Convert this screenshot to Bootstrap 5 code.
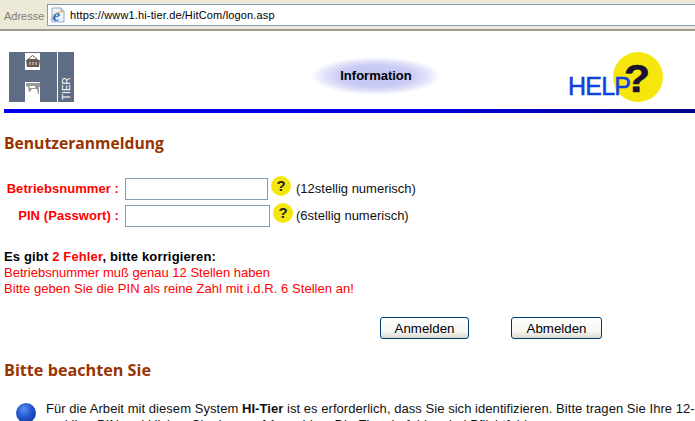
<!DOCTYPE html>
<html lang="de">
<head>
<meta charset="utf-8">
<title>HitCom Logon</title>
<link href="https://cdn.jsdelivr.net/npm/bootstrap@5.3.0/dist/css/bootstrap.min.css" rel="stylesheet">
<style>
html,body{width:695px;height:421px;overflow:hidden;background:#fff}
body{font-family:"Liberation Sans",Arial,sans-serif;font-size:13px;line-height:16px;color:#000}
.addr-bar{height:31px;background:#ece9d8;border-bottom:2px solid #9d9a8c;padding-top:4px}
.addr-label{color:#7f7d70;font-size:11px;padding:4px 0 0 4px;width:47px}
.addr-box{flex:1;height:22px;background:#fff;border:1px solid #7f9db9;border-right:0;gap:4px;padding-left:2px;font-size:11px;letter-spacing:.15px}
.head-row{height:78px;padding:21px 0 0 9px}
.logo-box{width:65px;height:50px}
.info-oval{width:130px;height:38px;margin-left:237px;margin-top:5px;font-weight:700;font-size:13px;background:radial-gradient(ellipse closest-side,#c6c6f6 0%,#cacaf6 55%,#e2e2fa 80%,#fff 100%)}
.help-box{width:98px;height:52px;margin-left:125px}
.blue-line{height:4px;margin-left:4px;background:linear-gradient(90deg,#0000ee 0%,#0000e0 60%,#00008a 100%)}
.sec-title{font-family:"Open Sans","DejaVu Sans",sans-serif;font-weight:700;line-height:20px;color:#993300;margin:0 0 0 4px}
.title-a{margin-top:20px;font-size:15.7px}
.title-b{margin-top:21px;font-size:16.2px}
.form-zone{margin-top:25px}
.form-line{height:27px;align-items:flex-start}
.lbl{width:119px;text-align:right;color:#f00;font-weight:700;line-height:22px;white-space:nowrap;letter-spacing:.07px}
.fld{height:22px;margin-left:6px;border:1px solid #7f9db9;background:#fff;padding:0 3px;font-size:12px}
.fld-a{width:143px}
.fld-b{width:145px}
.qm{width:20px;height:20px;border-radius:50%;background:#f6e60e;font-weight:700;font-size:15px;line-height:20px;text-align:center;color:#222;margin-top:-2px;flex:none}
.qm-a{margin-left:3px}
.qm-b{margin-left:3px;margin-top:-2px}
.hint{line-height:22px;margin-left:5px;color:#111;white-space:nowrap}
.hint-b{margin-left:3px}
.err-zone{margin:17px 0 0 4px}
.err-head{font-weight:700;letter-spacing:.15px}
.err-red{color:#f00}
.err-long{letter-spacing:.05px}
.btn-row{margin-top:20px;padding-left:380px;gap:42px}
.xp-btn{height:22px;padding:0;border:1px solid #003c74;border-radius:3px;background:linear-gradient(180deg,#fff 0%,#f4f4f0 70%,#dcd8cc 100%);font-size:13.3px;line-height:19px;color:#000;font-family:"Liberation Sans",Arial,sans-serif}
.xp-a{width:89px}
.xp-b{width:91px}
.note-row{margin:21px 0 0 16px;gap:10px;width:1100px}
.ball{width:20px;height:20px;border-radius:50%;flex:none;margin-top:2px;background:radial-gradient(circle at 40% 32%,#5c8df0 0%,#1f55cc 45%,#0f2f8f 100%)}
.note-txt{white-space:nowrap;color:#111;letter-spacing:.05px}
</style>
</head>
<body>
<div class="addr-bar d-flex align-items-start">
  <div class="addr-label">Adresse</div>
  <div class="addr-box d-flex align-items-center">
    <svg width="16" height="16" viewBox="0 0 16 16" aria-hidden="true">
      <path d="M2 1h9l3 3v11H2z" fill="#eef2fb" stroke="#7d94b8" stroke-width=".8"/>
      <path d="M11 1v3h3" fill="#cfdcf0" stroke="#7d94b8" stroke-width=".6"/>
      <text x="2.5" y="14" font-family="Liberation Serif, serif" font-weight="700" font-style="italic" font-size="17" fill="#1f6fd8">e</text>
      <path d="M1 13c2-6 7-9 12-8" fill="none" stroke="#e8a830" stroke-width=".9"/>
    </svg>
    <span>https://www1.hi-tier.de/HitCom/logon.asp</span>
  </div>
</div>

<div class="head-row d-flex align-items-start">
  <div class="logo-box">
    <svg width="65" height="50" viewBox="0 0 65 50" role="img" aria-label="HI-Tier Logo">
      <rect width="65" height="50" fill="#5f6d84"/>
      <rect x="48" width="1" height="50" fill="#fff"/>
      <rect x="16" y="1" width="15" height="17" fill="#fff"/>
      <rect x="16" y="30" width="15" height="20" fill="#fff"/>
      <path d="M23.500 3.500l5 4h-10z" fill="#fff" stroke="#6b5a50" stroke-width="1"/>
      <path d="M17 8h14l-1 7H18z" fill="#6b5a50"/>
      <path d="M21 10v3M24 10v3M27 10v3" stroke="#e4e0dc" stroke-width="1"/>
      <path d="M17 31h14v4h-1v7h-1l-1-5h-5l-2 3h-1l-1-5-2-1z" fill="#9a9a98"/>
      <path d="M20 34h6v2h-5z" fill="#fff"/>
      <text transform="translate(61 48) rotate(-90)" font-family="Liberation Sans, sans-serif" font-size="10" fill="#fff">TIER</text>
    </svg>
  </div>
  <div class="info-oval d-flex align-items-center justify-content-center">Information</div>
  <div class="help-box">
    <svg width="98" height="52" viewBox="0 0 98 52" role="img" aria-label="Help">
      <circle cx="72" cy="25" r="25" fill="#f6e60e"/>
      <text x="2" y="43" font-family="Liberation Sans, sans-serif" font-size="25" fill="#0f40e0" stroke="#0f40e0" stroke-width=".5" textLength="63">HELP</text>
      <text x="58" y="40" font-family="Liberation Sans, sans-serif" font-weight="700" font-size="38" fill="#1a1030" stroke="#1a1030" stroke-width=".6" textLength="26" lengthAdjust="spacingAndGlyphs">?</text>
    </svg>
  </div>
</div>
<div class="blue-line"></div>

<h2 class="sec-title title-a">Benutzeranmeldung</h2>

<form class="form-zone" onsubmit="return false">
  <div class="form-line d-flex">
    <label class="lbl" for="bnr">Betriebsnummer :</label>
    <input class="fld fld-a" id="bnr" type="text">
    <span class="qm qm-a">?</span>
    <span class="hint">(12stellig numerisch)</span>
  </div>
  <div class="form-line d-flex">
    <label class="lbl" for="pin">PIN (Passwort) :</label>
    <input class="fld fld-b" id="pin" type="password">
    <span class="qm qm-b">?</span>
    <span class="hint hint-b">(6stellig numerisch)</span>
  </div>
  <div class="err-zone">
    <div class="err-head">Es gibt <span class="err-red">2 Fehler</span>, bitte korrigieren:</div>
    <div class="err-red">Betriebsnummer muß genau 12 Stellen haben</div>
    <div class="err-red err-long">Bitte geben Sie die PIN als reine Zahl mit i.d.R. 6 Stellen an!</div>
  </div>
  <div class="btn-row d-flex">
    <button class="xp-btn xp-a" type="submit">Anmelden</button>
    <button class="xp-btn xp-b" type="button">Abmelden</button>
  </div>
</form>

<h2 class="sec-title title-b">Bitte beachten Sie</h2>

<div class="note-row d-flex align-items-start">
  <span class="ball"></span>
  <div class="note-txt">Für die Arbeit mit diesem System <b>HI-Tier</b> ist es erforderlich, dass Sie sich identifizieren. Bitte tragen Sie Ihre 12-stellige<br>und ihre PIN und klicken Sie dann auf Anmelden. Die Eingabefelder sind Pflichtfelder.</div>
</div>
</body>
</html>
